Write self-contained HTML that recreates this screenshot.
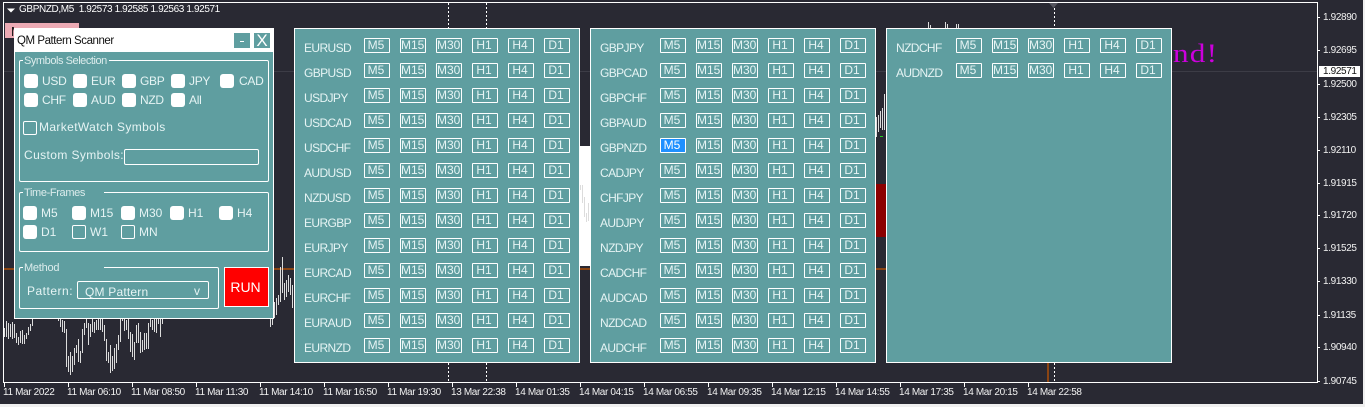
<!DOCTYPE html>
<html>
<head>
<meta charset="utf-8">
<style>
html,body{margin:0;padding:0;width:1365px;height:407px;overflow:hidden;background:#292933}
body{position:relative;font-family:"Liberation Sans",sans-serif;color:#e6f4f4}
div,span,svg{position:absolute}
svg{left:0;top:0}
.p{top:28px;width:286px;height:335px;background:#5f9ea0;box-shadow:inset 0 0 0 1px #fff}
.r{left:0;width:286px;height:25px}
.r i{position:absolute;left:10px;top:3px;font-style:normal;font-size:12px;line-height:14px;letter-spacing:-.6px;white-space:nowrap}
.r b{position:absolute;top:0;width:26px;height:15px;box-sizing:border-box;border:1px solid #fff;border-radius:1px;font-weight:normal;font-size:12px;line-height:12px;text-align:center;padding-right:2px;white-space:nowrap;overflow:hidden}
.r b:nth-of-type(1){left:70px}.r b:nth-of-type(2){left:106px}.r b:nth-of-type(3){left:142px}
.r b:nth-of-type(4){left:178px}.r b:nth-of-type(5){left:214px}.r b:nth-of-type(6){left:250px}
.r b.sel{background:#1e90ff;color:#fff}
.t{font-size:10px;line-height:12px;letter-spacing:-.36px;white-space:nowrap;color:#f2f2f2}
.pr{left:1323px}
.tm{top:387px}
.g{box-sizing:border-box;border:1px solid #fff;border-radius:2px}
.lg{background:#5f9ea0;font-size:11px;line-height:14px;white-space:nowrap;height:14px;color:#dcecec}
.c{width:14px;height:14px;background:#fff;border-radius:3px}
.o{width:14px;height:14px;box-sizing:border-box;border:1px solid #fff;border-radius:2px}
.l{font-size:12px;line-height:14px;white-space:nowrap}
.s{letter-spacing:-.3px}
</style>
</head>
<body>
<svg width="1365" height="407" viewBox="0 0 1365 407">
<rect x="3" y="71" width="1314" height="1" fill="#3c3c46"/>
<rect x="1363" y="0" width="2" height="407" fill="#f0f0f0"/>
<rect x="0" y="404" width="1365" height="3" fill="#f0f0f0"/>
<rect x="5" y="23" width="74" height="15" fill="#ecaab4"/>
<rect x="579" y="146" width="12" height="120" fill="#fff"/>
<rect x="876" y="184" width="10" height="53" fill="#8b0000"/>
<rect x="4" y="268" width="1040" height="2" fill="#8b4513"/>
<rect x="1047" y="362" width="2" height="21" fill="#8b4513"/>
<rect x="880" y="136" width="3" height="1" fill="#22cc22"/>
<path fill="none" stroke="#dcdcdc" stroke-width="1" d="M4.5 328V337M6.5 321V337M8.5 323V339M10.5 324V337M12.5 322V339M14.5 324V338M16.5 333V343M18.5 337V345M20.5 331V343M22.5 330V344M24.5 335V344M26.5 333V339M28.5 327V335M30.5 324V331M32.5 318V326M58.5 318V321M60.5 318V327M62.5 320V332M64.5 321V333M66.5 329V367M68.5 356V372M70.5 352V375M72.5 356V372M74.5 348V365M76.5 345V353M78.5 339V362M80.5 351V363M82.5 329V353M84.5 323V335M86.5 318V328M88.5 323V345M90.5 324V337M92.5 318V332M94.5 322V333M96.5 320V330M98.5 318V330M100.5 318V330M102.5 318V332M104.5 325V341M106.5 339V361M108.5 352V363M110.5 345V373M112.5 356V371M114.5 348V369M116.5 344V363M118.5 335V350M120.5 318V342M122.5 318V321M124.5 318V331M126.5 320V330M128.5 318V339M130.5 332V352M132.5 334V357M134.5 342V360M136.5 325V343M138.5 323V343M140.5 332V353M142.5 340V352M144.5 333V350M146.5 333V349M148.5 323V349M150.5 318V327M152.5 320V330M154.5 318V332M156.5 318V333M158.5 318V324M160.5 318V337M162.5 318V324M270.5 318V327M272.5 318V325M274.5 302V318M276.5 298V315M278.5 295V305M280.5 267V302M282.5 257V293M284.5 283V300M286.5 280V297M288.5 275V292M290.5 278V295M292.5 285V308M580.5 185V190M582.5 185V203M584.5 197V217M586.5 213V222M588.5 203V221M876.5 117V137M878.5 115V132M880.5 111V128M882.5 108V130M884.5 94V130M928.5 22V28M930.5 25V28M945.5 22V28M947.5 24V28M956.5 24V28M958.5 24V28"/>
<path fill="none" stroke="#fff" stroke-width="1" stroke-dasharray="2 2" d="M448.5 3V28M486.5 3V28M1054.5 8V28M448.5 363V383M486.5 363V383M1054.5 363V383"/>
<path fill="#55555f" d="M1049 3H1058L1053.500 8Z"/>
<path fill="none" stroke="#fff" stroke-width="1" d="M3.500 383V2.500H1317.500V382.500H3.500M4.500 383V387M68.500 383V387M132.500 383V387M196.500 383V387M260.500 383V387M324.500 383V387M388.500 383V387M452.500 383V387M516.500 383V387M580.500 383V387M644.500 383V387M708.500 383V387M772.500 383V387M836.500 383V387M900.500 383V387M964.500 383V387M1028.500 383V387M1317 17.500H1320M1317 50.500H1320M1317 84.500H1320M1317 117.500H1320M1317 150.500H1320M1317 183.500H1320M1317 215.500H1320M1317 248.500H1320M1317 281.500H1320M1317 315.500H1320M1317 347.500H1320M1317 381.500H1320"/>
<path fill="#fff" d="M7 8.500H15L11 12.500Z"/>
</svg>

<span style="left:11px;top:25px;font-size:13px;line-height:14px;color:#111;width:6px;overflow:hidden;height:14px">M</span>
<span class="t" style="left:19px;top:4px;color:#fff;letter-spacing:-.38px">GBPNZD,M5 &nbsp;1.92573 1.92585 1.92563 1.92571</span>
<span style="left:1173px;top:39px;font-family:'Liberation Serif',serif;font-size:26px;line-height:30px;letter-spacing:1px;color:#cc00dd;white-space:nowrap;transform:scaleX(1.2);transform-origin:0 0">nd!</span>

<span class="t pr" style="top:12px">1.92890</span>
<span class="t pr" style="top:45px">1.92695</span>
<div style="left:1319px;top:66px;width:41px;height:11px;background:#fff"></div>
<span class="t pr" style="top:66px;color:#111">1.92571</span>
<span class="t pr" style="top:79px">1.92500</span>
<span class="t pr" style="top:112px">1.92305</span>
<span class="t pr" style="top:145px">1.92110</span>
<span class="t pr" style="top:178px">1.91915</span>
<span class="t pr" style="top:210px">1.91720</span>
<span class="t pr" style="top:243px">1.91525</span>
<span class="t pr" style="top:276px">1.91330</span>
<span class="t pr" style="top:310px">1.91135</span>
<span class="t pr" style="top:342px">1.90940</span>
<span class="t pr" style="top:376px">1.90745</span>

<span class="t tm" style="left:3px">11 Mar 2022</span>
<span class="t tm" style="left:67px">11 Mar 06:10</span>
<span class="t tm" style="left:131px">11 Mar 08:50</span>
<span class="t tm" style="left:195px">11 Mar 11:30</span>
<span class="t tm" style="left:259px">11 Mar 14:10</span>
<span class="t tm" style="left:323px">11 Mar 16:50</span>
<span class="t tm" style="left:387px">11 Mar 19:30</span>
<span class="t tm" style="left:451px">13 Mar 22:38</span>
<span class="t tm" style="left:515px">14 Mar 01:35</span>
<span class="t tm" style="left:579px">14 Mar 04:15</span>
<span class="t tm" style="left:643px">14 Mar 06:55</span>
<span class="t tm" style="left:707px">14 Mar 09:35</span>
<span class="t tm" style="left:771px">14 Mar 12:15</span>
<span class="t tm" style="left:835px">14 Mar 14:55</span>
<span class="t tm" style="left:899px">14 Mar 17:35</span>
<span class="t tm" style="left:963px">14 Mar 20:15</span>
<span class="t tm" style="left:1027px">14 Mar 22:58</span>

<!-- Main dialog -->
<div style="left:14px;top:28px;width:260px;height:291px;background:#5f9ea0;box-shadow:inset 0 0 0 1px #fff"></div>
<div style="left:14px;top:28px;width:260px;height:24px;background:#fff;border-radius:1px 1px 0 0"></div>
<span style="left:17px;top:34px;font-size:11.5px;line-height:14px;color:#111;letter-spacing:-.45px;white-space:nowrap">QM Pattern Scanner</span>
<div style="left:234px;top:33px;width:16px;height:15px;background:#5f9ea0"></div>
<div style="left:240px;top:41px;width:4px;height:1px;background:#fff"></div>
<div style="left:254px;top:33px;width:16px;height:15px;background:#5f9ea0"></div>
<span style="left:254px;top:32px;width:16px;text-align:center;font-size:17px;line-height:17px;color:#fff">X</span>

<div class="g" style="left:19px;top:60px;width:250px;height:122px"></div>
<span class="lg" style="left:23px;top:54px;width:86px;padding-left:1px;box-sizing:border-box;letter-spacing:-.45px">Symbols Selection</span>
<div class="c" style="left:24px;top:74px"></div><span class="l s" style="left:42px;top:74px">USD</span>
<div class="c" style="left:73px;top:74px"></div><span class="l s" style="left:91px;top:74px">EUR</span>
<div class="c" style="left:122px;top:74px"></div><span class="l s" style="left:140px;top:74px">GBP</span>
<div class="c" style="left:171px;top:74px"></div><span class="l s" style="left:189px;top:74px">JPY</span>
<div class="c" style="left:220px;top:74px"></div><span class="l s" style="left:239px;top:74px">CAD</span>
<div class="c" style="left:24px;top:93px"></div><span class="l s" style="left:42px;top:93px">CHF</span>
<div class="c" style="left:73px;top:93px"></div><span class="l s" style="left:91px;top:93px">AUD</span>
<div class="c" style="left:122px;top:93px"></div><span class="l s" style="left:140px;top:93px">NZD</span>
<div class="c" style="left:171px;top:93px"></div><span class="l s" style="left:189px;top:93px">All</span>
<div class="o" style="left:23px;top:121px"></div><span class="l" style="left:39px;top:120px;letter-spacing:.37px">MarketWatch Symbols</span>
<span class="l" style="left:24px;top:148px;letter-spacing:.4px">Custom Symbols:</span>
<div class="g" style="left:124px;top:149px;width:135px;height:16px"></div>

<div class="g" style="left:19px;top:192px;width:250px;height:60px"></div>
<span class="lg" style="left:23px;top:187px;width:81px;height:10px;line-height:12px;padding-left:1px;box-sizing:border-box;letter-spacing:-.36px">Time-Frames</span>
<div class="c" style="left:23px;top:206px"></div><span class="l" style="left:41px;top:206px">M5</span>
<div class="c" style="left:72px;top:206px"></div><span class="l" style="left:90px;top:206px">M15</span>
<div class="c" style="left:121px;top:206px"></div><span class="l" style="left:139px;top:206px">M30</span>
<div class="c" style="left:170px;top:206px"></div><span class="l" style="left:188px;top:206px">H1</span>
<div class="c" style="left:219px;top:206px"></div><span class="l" style="left:237px;top:206px">H4</span>
<div class="c" style="left:23px;top:225px"></div><span class="l" style="left:41px;top:225px">D1</span>
<div class="o" style="left:72px;top:225px"></div><span class="l" style="left:90px;top:225px">W1</span>
<div class="o" style="left:121px;top:225px"></div><span class="l" style="left:139px;top:225px">MN</span>

<div class="g" style="left:19px;top:267px;width:200px;height:42px"></div>
<span class="lg" style="left:23px;top:262px;width:81px;height:10px;line-height:12px;padding-left:1px;box-sizing:border-box;letter-spacing:-.25px">Method</span>
<span class="l" style="left:27px;top:284px;letter-spacing:.5px">Pattern:</span>
<div class="g" style="left:77px;top:281px;width:132px;height:18px"></div>
<span class="l" style="left:85px;top:285px;letter-spacing:.2px">QM Pattern</span>
<span class="l" style="left:194px;top:284px">v</span>
<div style="left:224px;top:267px;width:45px;height:40px;box-sizing:border-box;background:#f00;border:1px solid #fff"></div>
<span style="left:224px;top:279px;width:43px;text-align:center;font-size:14px;line-height:16px;color:#fff">RUN</span>

<!-- Panel 1 -->
<div class="p" style="left:294px">
<div class="r" style="top:10px"><i>EURUSD</i><b>M5</b><b>M15</b><b>M30</b><b>H1</b><b>H4</b><b>D1</b></div>
<div class="r" style="top:35px"><i>GBPUSD</i><b>M5</b><b>M15</b><b>M30</b><b>H1</b><b>H4</b><b>D1</b></div>
<div class="r" style="top:60px"><i>USDJPY</i><b>M5</b><b>M15</b><b>M30</b><b>H1</b><b>H4</b><b>D1</b></div>
<div class="r" style="top:85px"><i>USDCAD</i><b>M5</b><b>M15</b><b>M30</b><b>H1</b><b>H4</b><b>D1</b></div>
<div class="r" style="top:110px"><i>USDCHF</i><b>M5</b><b>M15</b><b>M30</b><b>H1</b><b>H4</b><b>D1</b></div>
<div class="r" style="top:135px"><i>AUDUSD</i><b>M5</b><b>M15</b><b>M30</b><b>H1</b><b>H4</b><b>D1</b></div>
<div class="r" style="top:160px"><i>NZDUSD</i><b>M5</b><b>M15</b><b>M30</b><b>H1</b><b>H4</b><b>D1</b></div>
<div class="r" style="top:185px"><i>EURGBP</i><b>M5</b><b>M15</b><b>M30</b><b>H1</b><b>H4</b><b>D1</b></div>
<div class="r" style="top:210px"><i>EURJPY</i><b>M5</b><b>M15</b><b>M30</b><b>H1</b><b>H4</b><b>D1</b></div>
<div class="r" style="top:235px"><i>EURCAD</i><b>M5</b><b>M15</b><b>M30</b><b>H1</b><b>H4</b><b>D1</b></div>
<div class="r" style="top:260px"><i>EURCHF</i><b>M5</b><b>M15</b><b>M30</b><b>H1</b><b>H4</b><b>D1</b></div>
<div class="r" style="top:285px"><i>EURAUD</i><b>M5</b><b>M15</b><b>M30</b><b>H1</b><b>H4</b><b>D1</b></div>
<div class="r" style="top:310px"><i>EURNZD</i><b>M5</b><b>M15</b><b>M30</b><b>H1</b><b>H4</b><b>D1</b></div>
</div>

<!-- Panel 2 -->
<div class="p" style="left:590px">
<div class="r" style="top:10px"><i>GBPJPY</i><b>M5</b><b>M15</b><b>M30</b><b>H1</b><b>H4</b><b>D1</b></div>
<div class="r" style="top:35px"><i>GBPCAD</i><b>M5</b><b>M15</b><b>M30</b><b>H1</b><b>H4</b><b>D1</b></div>
<div class="r" style="top:60px"><i>GBPCHF</i><b>M5</b><b>M15</b><b>M30</b><b>H1</b><b>H4</b><b>D1</b></div>
<div class="r" style="top:85px"><i>GBPAUD</i><b>M5</b><b>M15</b><b>M30</b><b>H1</b><b>H4</b><b>D1</b></div>
<div class="r" style="top:110px"><i>GBPNZD</i><b class="sel">M5</b><b>M15</b><b>M30</b><b>H1</b><b>H4</b><b>D1</b></div>
<div class="r" style="top:135px"><i>CADJPY</i><b>M5</b><b>M15</b><b>M30</b><b>H1</b><b>H4</b><b>D1</b></div>
<div class="r" style="top:160px"><i>CHFJPY</i><b>M5</b><b>M15</b><b>M30</b><b>H1</b><b>H4</b><b>D1</b></div>
<div class="r" style="top:185px"><i>AUDJPY</i><b>M5</b><b>M15</b><b>M30</b><b>H1</b><b>H4</b><b>D1</b></div>
<div class="r" style="top:210px"><i>NZDJPY</i><b>M5</b><b>M15</b><b>M30</b><b>H1</b><b>H4</b><b>D1</b></div>
<div class="r" style="top:235px"><i>CADCHF</i><b>M5</b><b>M15</b><b>M30</b><b>H1</b><b>H4</b><b>D1</b></div>
<div class="r" style="top:260px"><i>AUDCAD</i><b>M5</b><b>M15</b><b>M30</b><b>H1</b><b>H4</b><b>D1</b></div>
<div class="r" style="top:285px"><i>NZDCAD</i><b>M5</b><b>M15</b><b>M30</b><b>H1</b><b>H4</b><b>D1</b></div>
<div class="r" style="top:310px"><i>AUDCHF</i><b>M5</b><b>M15</b><b>M30</b><b>H1</b><b>H4</b><b>D1</b></div>
</div>

<!-- Panel 3 -->
<div class="p" style="left:886px">
<div class="r" style="top:10px"><i>NZDCHF</i><b>M5</b><b>M15</b><b>M30</b><b>H1</b><b>H4</b><b>D1</b></div>
<div class="r" style="top:35px"><i>AUDNZD</i><b>M5</b><b>M15</b><b>M30</b><b>H1</b><b>H4</b><b>D1</b></div>
</div>
</body>
</html>
